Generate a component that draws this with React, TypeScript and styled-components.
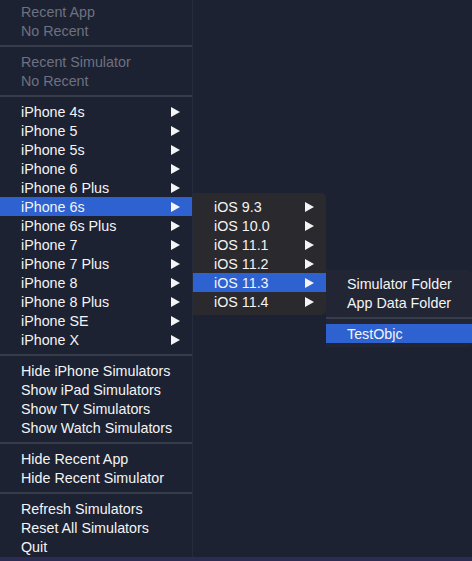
import React from 'react';
import styled, { createGlobalStyle } from 'styled-components';

const GlobalStyle = createGlobalStyle`
  html, body {
    margin: 0;
    padding: 0;
    background: #1d2233;
  }
  body {
    font-family: "Liberation Sans", Arial, sans-serif;
    -webkit-font-smoothing: antialiased;
  }
`;

const Screen = styled.div`
  width: 472px;
  height: 561px;
  overflow: hidden;
  display: flex;
  flex-direction: column;
  background: #1d2233;
`;

const Menus = styled.div`
  flex: 1;
  display: flex;
  align-items: flex-start;
  min-height: 0;
`;

const BottomEdge = styled.div`
  height: 4px;
  background: #2c2b52;
`;

const MainMenu = styled.div`
  width: 193px;
  flex: none;
  align-self: stretch;
  padding-top: 2px;
  box-sizing: border-box;
  border-right: 1px solid #262c3c;
`;

const Panel = styled.div<{ $top: number; $width?: number; $bg: string }>`
  margin-top: ${(p) => p.$top}px;
  width: ${(p) => (p.$width ? `${p.$width}px` : 'auto')};
  flex: ${(p) => (p.$width ? 'none' : '1')};
  padding: 4px 0;
  background: ${(p) => p.$bg};
  border-radius: 0 5px 5px 0;
  box-sizing: border-box;
`;

const Row = styled.div<{ $active?: boolean; $disabled?: boolean }>`
  height: 19px;
  display: flex;
  align-items: center;
  justify-content: space-between;
  padding: 0 12px 0 21px;
  font-size: 14.3px;
  color: ${(p) => (p.$disabled ? '#6d7180' : '#f4f4f4')};
  background: ${(p) => (p.$active ? '#2e62d1' : 'transparent')};
  white-space: nowrap;
`;

const Arrow = styled.span`
  width: 0;
  height: 0;
  border-top: 5px solid transparent;
  border-bottom: 5px solid transparent;
  border-left: 9px solid #f4f4f4;
`;

const Separator = styled.div`
  height: 12px;
  display: flex;
  align-items: center;
  &::after {
    content: '';
    flex: 1;
    height: 2px;
    background: #373c4b;
  }
`;

const iphones = [
  'iPhone 4s',
  'iPhone 5',
  'iPhone 5s',
  'iPhone 6',
  'iPhone 6 Plus',
  'iPhone 6s',
  'iPhone 6s Plus',
  'iPhone 7',
  'iPhone 7 Plus',
  'iPhone 8',
  'iPhone 8 Plus',
  'iPhone SE',
  'iPhone X',
];

const versions = ['iOS 9.3', 'iOS 10.0', 'iOS 11.1', 'iOS 11.2', 'iOS 11.3', 'iOS 11.4'];

export default function App() {
  return (
    <>
      <GlobalStyle />
      <Screen>
        <Menus>
          <MainMenu>
            <Row $disabled>Recent App</Row>
            <Row $disabled>No Recent</Row>
            <Separator />
            <Row $disabled>Recent Simulator</Row>
            <Row $disabled>No Recent</Row>
            <Separator />
            {iphones.map((name) => (
              <Row key={name} $active={name === 'iPhone 6s'}>
                {name}
                <Arrow />
              </Row>
            ))}
            <Separator />
            <Row>Hide iPhone Simulators</Row>
            <Row>Show iPad Simulators</Row>
            <Row>Show TV Simulators</Row>
            <Row>Show Watch Simulators</Row>
            <Separator />
            <Row>Hide Recent App</Row>
            <Row>Hide Recent Simulator</Row>
            <Separator />
            <Row>Refresh Simulators</Row>
            <Row>Reset All Simulators</Row>
            <Row>Quit</Row>
          </MainMenu>

          <Panel $top={193} $width={133} $bg="#2a292e">
            {versions.map((v) => (
              <Row key={v} $active={v === 'iOS 11.3'}>
                {v}
                <Arrow />
              </Row>
            ))}
          </Panel>

          <Panel $top={270} $bg="#222533">
            <Row>Simulator Folder</Row>
            <Row>App Data Folder</Row>
            <Separator />
            <Row $active>TestObjc</Row>
          </Panel>
        </Menus>
        <BottomEdge />
      </Screen>
    </>
  );
}
